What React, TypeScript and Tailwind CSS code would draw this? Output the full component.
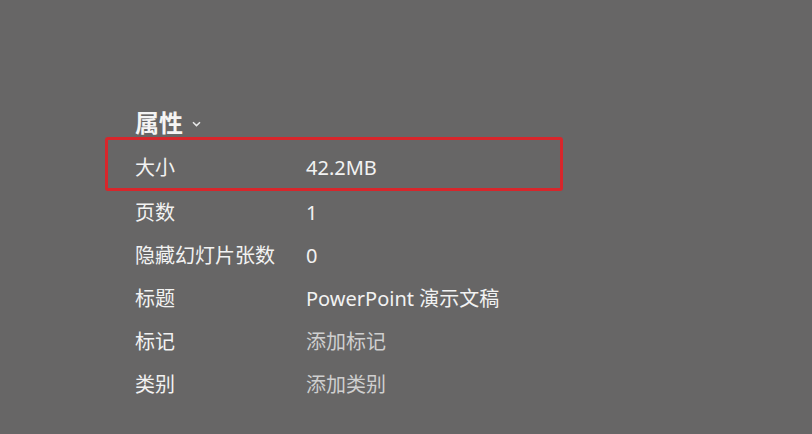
import React from "react";

const rows: { label: string; value: string; dim?: boolean }[] = [
  { label: "页数", value: "1" },
  { label: "隐藏幻灯片张数", value: "0" },
  { label: "标题", value: "PowerPoint 演示文稿" },
  { label: "标记", value: "添加标记", dim: true },
  { label: "类别", value: "添加类别", dim: true },
];

export default function App() {
  return (
    <div
      className="w-[812px] h-[434px] bg-[#676666] overflow-hidden pt-[108px]"
      style={{ fontFamily: '"Noto Sans", "Noto Sans CJK SC", sans-serif' }}
    >
      <div className="h-[29px] pl-[135px] flex items-center gap-[9px]">
        <span className="text-[24px] font-bold text-[#f4f4f4] leading-none">属性</span>
        <svg width="9" height="6" viewBox="0 0 9 6" className="mt-[3px]">
          <path d="M1 1.2 L4.5 4.6 L8 1.2" fill="none" stroke="#e8e8e8" strokeWidth="1.5" />
        </svg>
      </div>
      <div className="ml-[105px] w-[458px] h-[54px] border-[3px] border-[#d7262b] rounded-[3px] flex items-center pl-[27px] pt-[8px]">
        <span className="w-[171px] text-[20px] text-[#f2f2f2] leading-none">大小</span>
        <span className="text-[20px] text-[#f2f2f2] leading-none">42.2MB</span>
      </div>
      <div className="flex flex-col pl-[135px]">
        {rows.map((r) => (
          <div key={r.label} className="h-[43px] flex items-center">
            <span className="w-[171px] text-[20px] text-[#f2f2f2] leading-none">{r.label}</span>
            <span
              className={
                r.dim
                  ? "text-[20px] text-[#cfcfcf] leading-none"
                  : "text-[20px] text-[#f2f2f2] leading-none"
              }
            >
              {r.value}
            </span>
          </div>
        ))}
      </div>
    </div>
  );
}
